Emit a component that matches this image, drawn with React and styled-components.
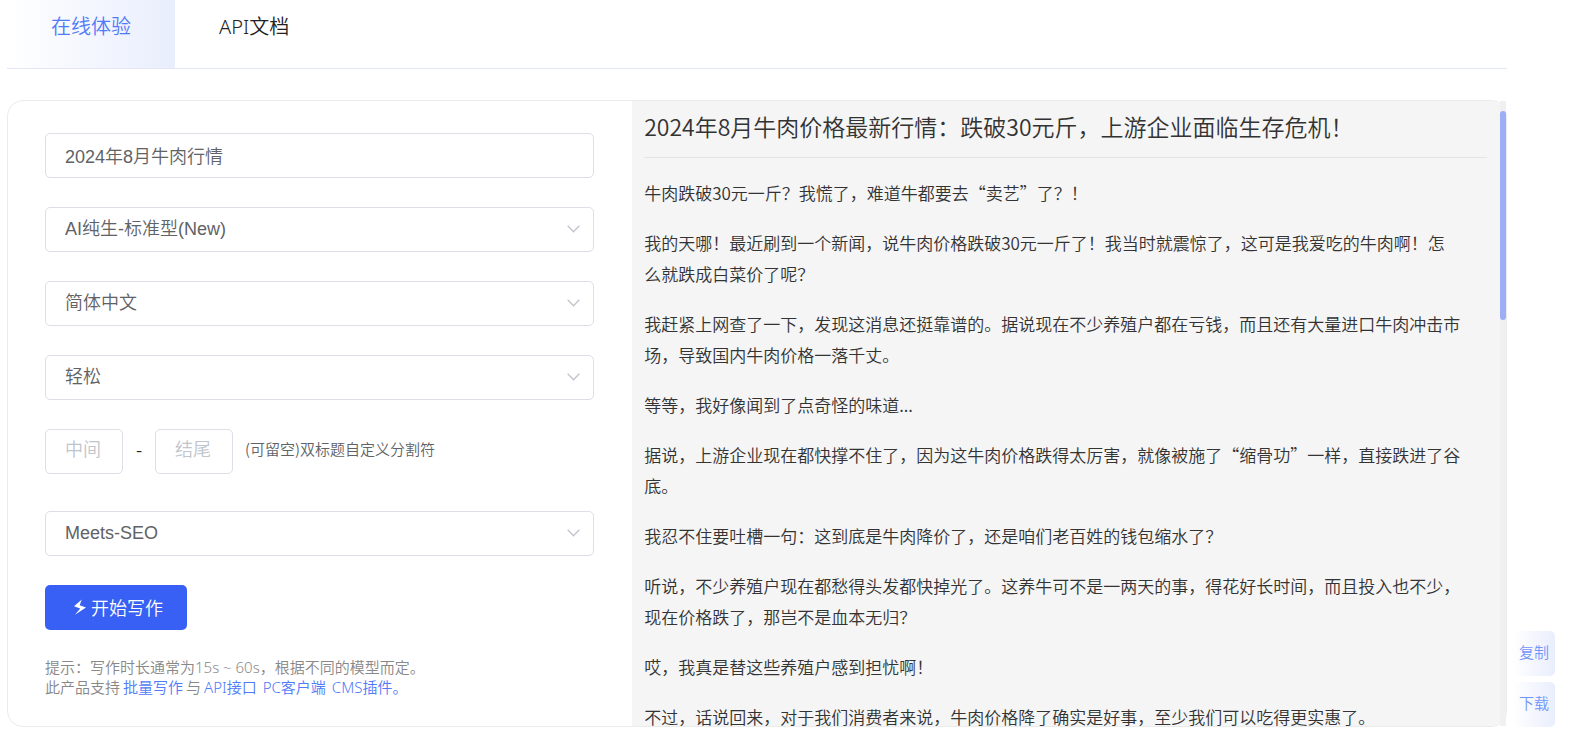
import React, { useState } from 'react';
import styled, { createGlobalStyle } from 'styled-components';

const GlobalStyle = createGlobalStyle`
  * {
    box-sizing: border-box;
  }

  body {
    margin: 0;
    background: #fff;
    color: #333;
    font-family: 'Noto Sans CJK SC', 'Noto Sans', sans-serif;
    font-weight: 350;
  }
`;

const Page = styled.div`
  display: flex;
  align-items: flex-end;
  gap: 6px;
  padding: 0 37px 5px 7px;
`;

const Main = styled.main`
  flex: 1;
  min-width: 0;
`;

const Tabs = styled.nav`
  display: flex;
  margin-bottom: 31px;
  border-bottom: 1px solid #e3e6f6;
`;

const Tab = styled.button`
  padding: 0 44px 14px;
  border: 0;
  background: ${({ $active }) =>
    $active ? 'linear-gradient(to right, #fff, #e9eefd)' : 'transparent'};
  color: ${({ $active }) => ($active ? '#4f7af8' : '#222')};
  font-family: 'Noto Sans', 'Noto Sans CJK SC', sans-serif;
  font-size: 20px;
  font-weight: 350;
  line-height: 54px;
  cursor: pointer;
`;

const Card = styled.section`
  display: grid;
  grid-template-columns: minmax(0, 5fr) minmax(0, 7fr);
  border: 1px solid #ebebeb;
  border-radius: 16px;
`;

const Form = styled.form`
  display: flex;
  flex-direction: column;
  align-items: flex-start;
  gap: 29px;
  padding: 32px 38px 29px 37px;
`;

const Input = styled.input`
  width: ${({ $small }) => ($small ? '78px' : '100%')};
  height: 45px;
  padding: 0 19px 2px;
  border: 1px solid #dcdfe6;
  border-radius: 5px;
  background: #fff;
  color: #606266;
  font-family: 'Liberation Sans', 'Noto Sans CJK SC', sans-serif;
  font-size: 18px;
  font-weight: 350;

  &::placeholder {
    color: #c0c4cc;
  }
`;

const SelectBox = styled.div`
  position: relative;
  width: 100%;

  svg {
    position: absolute;
    top: 18px;
    right: 14px;
    pointer-events: none;
  }
`;

const SelectInput = styled(Input)`
  display: block;
  appearance: none;
`;

const SplitRow = styled.div`
  display: flex;
  align-items: center;
  margin-bottom: 8px;
  color: #606266;
  font-size: 15px;
  line-height: 20px;
`;

const Dash = styled.span`
  width: 32px;
  padding-bottom: 6px;
  color: #222;
  font-size: 18px;
  text-align: center;
`;

const SplitNote = styled.span`
  margin-left: 12px;
  padding-bottom: 6px;
`;

const SubmitButton = styled.button`
  display: flex;
  align-items: center;
  gap: 5px;
  height: 45px;
  padding: 0 24px 2px 29px;
  border: 0;
  border-radius: 5px;
  background: #3860f4;
  color: #fff;
  font: inherit;
  font-size: 18px;
  cursor: pointer;
`;

const Hint = styled.p`
  margin: -2px 0 0;
  color: #888;
  font-family: 'Noto Sans', 'Noto Sans CJK SC', sans-serif;
  font-size: 15px;
  line-height: 20px;
`;

const HintLink = styled.a`
  margin: 0 3px;
  color: #4f7af8;
  text-decoration: none;
`;

const Result = styled.div`
  display: flex;
  contain: size;
  border-radius: 0 16px 16px 0;
  background: #f5f5f5;
`;

const Article = styled.article`
  display: flex;
  flex: 1;
  flex-direction: column;
  gap: 19px;
  padding: 9px 13px 0 12px;
  overflow-y: auto;
  scrollbar-width: none;
`;

const ArticleTitle = styled.h1`
  margin: 0;
  padding-bottom: 14px;
  border-bottom: 1px solid #e4e4e4;
  font-size: 23px;
  font-weight: 350;
  line-height: 33px;
`;

const Paragraph = styled.p`
  max-width: 48em;
  margin: 0;
  font-size: 17px;
  line-height: 31px;
`;

const ScrollTrack = styled.div`
  width: 6px;
  padding-top: 10px;
  background: #f0f0f0;
`;

const ScrollThumb = styled.div`
  height: 34%;
  border-radius: 3px;
  background: #9daef5;
`;

const Side = styled.aside`
  display: flex;
  flex-direction: column;
  gap: 6px;
`;

const SideButton = styled.button`
  width: 42px;
  height: 45px;
  padding: 0 0 4px;
  border: 0;
  border-radius: 5px;
  background: linear-gradient(to right, #fff, #e9eefd);
  color: #7295f9;
  font: inherit;
  font-size: 15px;
  cursor: pointer;
`;

const tabs = ['在线体验', 'API文档'];

const title = '2024年8月牛肉价格最新行情：跌破30元斤，上游企业面临生存危机！';

const paragraphs = [
  '牛肉跌破30元一斤？我慌了，难道牛都要去“卖艺”了？！',
  '我的天哪！最近刷到一个新闻，说牛肉价格跌破30元一斤了！我当时就震惊了，这可是我爱吃的牛肉啊！怎么就跌成白菜价了呢？',
  '我赶紧上网查了一下，发现这消息还挺靠谱的。据说现在不少养殖户都在亏钱，而且还有大量进口牛肉冲击市场，导致国内牛肉价格一落千丈。',
  '等等，我好像闻到了点奇怪的味道...',
  '据说，上游企业现在都快撑不住了，因为这牛肉价格跌得太厉害，就像被施了“缩骨功”一样，直接跌进了谷底。',
  '我忍不住要吐槽一句：这到底是牛肉降价了，还是咱们老百姓的钱包缩水了？',
  '听说，不少养殖户现在都愁得头发都快掉光了。这养牛可不是一两天的事，得花好长时间，而且投入也不少，现在价格跌了，那岂不是血本无归？',
  '哎，我真是替这些养殖户感到担忧啊！',
  '不过，话说回来，对于我们消费者来说，牛肉价格降了确实是好事，至少我们可以吃得更实惠了。',
];

function Select({ label, value }) {
  return (
    <SelectBox>
      <SelectInput as="select" aria-label={label} defaultValue={value}>
        <option>{value}</option>
      </SelectInput>
      <svg width="13" height="8" viewBox="0 0 13 8" fill="none" stroke="#c0c4cc">
        <path d="M0.7 0.8 L6.5 6.7 L12.3 0.8" strokeWidth="1.3" />
      </svg>
    </SelectBox>
  );
}

function App() {
  const [activeTab, setActiveTab] = useState(tabs[0]);
  const [keyword, setKeyword] = useState('2024年8月牛肉行情');

  const handleSubmit = (e) => {
    e.preventDefault();
  };

  const handleCopy = () => {
    navigator.clipboard.writeText([title, ...paragraphs].join('\n'));
  };

  return (
    <>
      <GlobalStyle />
      <Page>
        <Main>
          <Tabs>
            {tabs.map((tab) => (
              <Tab
                key={tab}
                $active={tab === activeTab}
                onClick={() => setActiveTab(tab)}
              >
                {tab}
              </Tab>
            ))}
          </Tabs>
          <Card>
            <Form onSubmit={handleSubmit}>
              <Input
                aria-label="关键词"
                value={keyword}
                onChange={(e) => setKeyword(e.target.value)}
              />
              <Select label="模型" value="AI纯生-标准型(New)" />
              <Select label="语言" value="简体中文" />
              <Select label="风格" value="轻松" />
              <SplitRow>
                <Input $small aria-label="中间" placeholder="中间" />
                <Dash>-</Dash>
                <Input $small aria-label="结尾" placeholder="结尾" />
                <SplitNote>(可留空)双标题自定义分割符</SplitNote>
              </SplitRow>
              <Select label="SEO" value="Meets-SEO" />
              <SubmitButton type="submit">
                <svg width="12" height="16" viewBox="0 0 12 16" fill="#fff">
                  <path d="M7.8 0.5 L0 7.2 L6.2 9.6 L1 15.8 L12 8.6 L5.6 6.2 Z" />
                </svg>
                开始写作
              </SubmitButton>
              <Hint>
                提示：写作时长通常为15s ~ 60s，根据不同的模型而定。
                <br />
                此产品支持<HintLink href="#batch">批量写作</HintLink>与
                <HintLink href="#api">API接口</HintLink>
                <HintLink href="#pc">PC客户端</HintLink>
                <HintLink href="#cms">CMS插件。</HintLink>
              </Hint>
            </Form>
            <Result>
              <Article>
                <ArticleTitle>{title}</ArticleTitle>
                {paragraphs.map((text) => (
                  <Paragraph key={text}>{text}</Paragraph>
                ))}
              </Article>
              <ScrollTrack>
                <ScrollThumb />
              </ScrollTrack>
            </Result>
          </Card>
        </Main>
        <Side>
          <SideButton onClick={handleCopy}>复制</SideButton>
          <SideButton>下载</SideButton>
        </Side>
      </Page>
    </>
  );
}

export default App;
